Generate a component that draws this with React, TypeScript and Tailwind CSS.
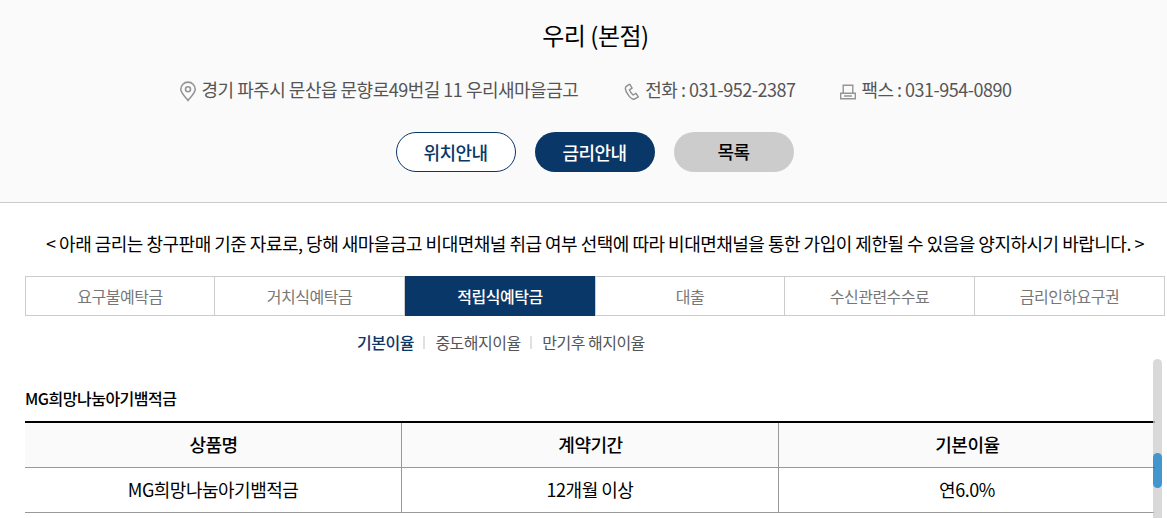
import clsx from 'clsx';

interface InfoItem {
    icon: React.ReactNode;
    text: string;
    className: string;
}

const PinIcon = () => (
    <svg width="18" height="21" viewBox="0 0 18 21" fill="none" stroke="#959595" strokeWidth="1.6" className="mt-[5px] mr-[4px]">
        <path d="M9 19.4C6.6 16.2 1.8 12.2 1.8 8.3A7.2 7.2 0 0 1 16.2 8.3C16.2 12.2 11.4 16.2 9 19.4Z" />
        <circle cx="9" cy="8.3" r="2.5" />
    </svg>
)

const PhoneIcon = () => (
    <svg width="16" height="18" viewBox="0 0 16 18" fill="none" stroke="#8f8f8f" strokeWidth="1.4" strokeLinejoin="round" className="mt-[5px] mr-[5px]">
        <path d="M5.2 1.4L1.9 3.6C.8 5.4 2.1 9 4.4 12.1C6.4 14.8 8.6 16.5 10.4 16.2L14.3 13.8L12 10.3L9.1 12C7.6 10.8 6 8.4 5.4 6.8L8.1 5.1L5.9 1.4Z" />
    </svg>
)

const FaxIcon = () => (
    <svg width="16" height="16" viewBox="0 0 16 16" fill="none" stroke="#959595" strokeWidth="1.4" className="mt-[5px] mr-[5px]">
        <path d="M3.2 9V1.2H12.8V9M.7 9.2H15.3V14.8H.7ZM4 12H12" />
    </svg>
)

const infos: InfoItem[] = [
    { icon: <PinIcon />, text: '경기 파주시 문산읍 문향로49번길 11 우리새마을금고', className: '' },
    { icon: <PhoneIcon />, text: '전화 : 031-952-2387', className: 'ml-[46px]' },
    { icon: <FaxIcon />, text: '팩스 : 031-954-0890', className: 'ml-[45px]' },
]

const tabs = ['요구불예탁금', '거치식예탁금', '적립식예탁금', '대출', '수신관련수수료', '금리인하요구권'];
const subTabs = ['기본이율', '중도해지이율', '만기후 해지이율'];

function BranchHeader() {
    return (
        <header className="h-[203px] bg-[#fafafa] border-b border-[#ccc] flex flex-col items-center">
            <h1 className="mt-[17px] h-[36px] pl-px text-[24px] leading-[36px]">우리 (본점)</h1>
            <div className="mt-[22px] h-[28px] pl-px flex items-center text-[18px] leading-[28px] text-[#555]">
                {infos.map((info) => (
                    <div key={info.text} className={clsx('flex items-center whitespace-nowrap', info.className)}>
                        {info.icon}
                        <span>{info.text}</span>
                    </div>
                ))}
            </div>
            <div className="mt-[29px] flex gap-[19px] text-[18px] font-medium">
                <button className="w-[120px] h-[40px] pr-px rounded-full border border-[#093768] bg-white text-[#093768]">위치안내</button>
                <button className="w-[120px] h-[40px] pr-px rounded-full bg-[#093768] text-white">금리안내</button>
                <button className="w-[120px] h-[40px] pr-px pb-px rounded-full bg-[#ccc] text-black">목록</button>
            </div>
        </header>
    )
}

function RateTable() {
    return (
        <table className="w-[1130px] table-fixed border-collapse text-[18px] leading-[26px] text-center">
            <thead>
                <tr className="h-[45px] bg-[#fafafa] border-t-2 border-t-black">
                    <th className="p-0 pb-[2px] pl-px font-medium border-b border-r border-[#999]">상품명</th>
                    <th className="p-0 pb-[2px] pl-px font-medium border-b border-r border-[#999]">계약기간</th>
                    <th className="p-0 pb-[2px] pl-px font-medium border-b border-[#999]">기본이율</th>
                </tr>
            </thead>
            <tbody>
                <tr className="h-[45px]">
                    <td className="p-0 pb-[2px] border-b border-r border-[#999]">MG희망나눔아기뱀적금</td>
                    <td className="p-0 pb-[2px] border-b border-r border-[#999]">12개월 이상</td>
                    <td className="p-0 pb-[2px] border-b border-[#999]">연6.0%</td>
                </tr>
            </tbody>
        </table>
    )
}

function App() {
    return (
        <div className="w-full h-[518px] overflow-hidden bg-white text-black tracking-[-0.5px] font-['Noto_Sans_CJK_KR',sans-serif]">
            <div className="w-[1190px]">
                <BranchHeader />

                <main className="px-[25px]">
                    <p className="mt-[26px] h-[28px] text-[18px] leading-[28px] text-center whitespace-nowrap">
                        &lt; 아래 금리는 창구판매 기준 자료로, 당해 새마을금고 비대면채널 취급 여부 선택에 따라 비대면채널을 통한 가입이 제한될 수 있음을 양지하시기 바랍니다. &gt;
                    </p>

                    <ul className="mt-[19px] h-[40px] flex border-l border-[#ccc] text-[16px]">
                        {tabs.map((tab, i) => (
                            <li
                                key={tab}
                                className={clsx(
                                    'flex items-center justify-center',
                                    i === 0 ? 'w-[189px]' : 'w-[190px]',
                                    i === 2 ? 'bg-[#093768] text-white font-medium' : 'border-y border-r border-[#ccc] text-[#777]',
                                    i === 3 && 'border-l'
                                )}
                            >
                                {tab}
                            </li>
                        ))}
                    </ul>

                    <ul className="mt-[14px] ml-[332px] h-[24px] flex items-center text-[16px] leading-[24px] text-[#555]">
                        {subTabs.map((tab, i) => (
                            <li key={tab} className={clsx('flex items-center', i === 0 && 'text-[#093768] font-medium')}>
                                {i > 0 && <span className="w-[2px] h-[13px] mr-[10px] ml-[9.5px] bg-[#e0e0e0]" />}
                                {tab}
                            </li>
                        ))}
                    </ul>

                    {/* scroll area */}
                    <div className="relative mt-[5px] h-[159px]">
                        <h2 className="pt-[27px] pb-[11px] text-[16px] leading-[24px] font-medium">MG희망나눔아기뱀적금</h2>
                        <RateTable />
                        <div className="absolute top-0 left-[1128px] w-[9px] h-[200px] rounded-full bg-[#d9d9d9]">
                            <div className="mt-[94px] w-[9px] h-[35px] rounded-full bg-[#4295cd]" />
                            {/* table rules showing through the track */}
                            <span className="absolute left-0 top-[62px] w-[2px] h-[2px] bg-[#999]" />
                            <span className="absolute left-0 top-[108px] w-[2px] h-px bg-[#35789f]" />
                            <span className="absolute left-0 top-[153px] w-[2px] h-px bg-[#c4c4c4]" />
                        </div>
                    </div>
                </main>
            </div>
        </div>
    )
}

export default App;
